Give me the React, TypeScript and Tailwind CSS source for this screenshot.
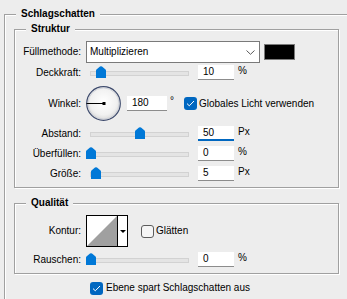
import React from "react";

const etched =
  "border border-[#a0a0a0] shadow-[1px_1px_0_#ffffff,inset_1px_1px_0_#ffffff]";

const Slider = ({ pos }: { pos: number }) => (
  <div className="relative h-[15px] w-[107px] shrink-0">
    <div className="absolute left-[4px] right-[4px] top-[6px] h-[5px] border border-[#d2d2d2] bg-[#e4e4e4]" />
    <svg
      className="absolute top-[1px]"
      style={{ left: pos }}
      width="10"
      height="12"
      viewBox="0 0 10 12"
    >
      <path
        d="M0 4.6 Q0 3.6 1 2.9 L4 0.6 Q5 -0.1 6 0.6 L9 2.9 Q10 3.6 10 4.6 V12 H0 Z"
        fill="#0078d7"
      />
    </svg>
  </div>
);

const Field = ({
  value,
  w = "w-[36px]",
  focus = false,
}: {
  value: string;
  w?: string;
  focus?: boolean;
}) => (
  <div
    className={`${w} h-[15px] shrink-0 bg-white pl-[5px] leading-[14px] ${
      focus
        ? "border-b-2 border-[#0067c0]"
        : "border-b border-[#8c8c8c]"
    }`}
  >
    {value}
  </div>
);

const Check = ({ checked }: { checked: boolean }) =>
  checked ? (
    <div className="flex h-[13px] w-[13px] shrink-0 items-center justify-center rounded-[3px] bg-[#0067c0]">
      <svg width="9" height="7" viewBox="0 0 9 7">
        <path d="M1 3.6 L3.3 5.8 L8 1" fill="none" stroke="#ffffff" strokeWidth="1" />
      </svg>
    </div>
  ) : (
    <div className="h-[13px] w-[13px] shrink-0 rounded-[3px] border border-[#5c5c5c] bg-[#f5f5f5]" />
  );

const Label = ({ children }: { children: React.ReactNode }) => (
  <div className="w-[66px] shrink-0 text-right">{children}</div>
);

const SliderRow = ({
  label,
  pos,
  value,
  unit,
  focus,
  className = "",
}: {
  label: string;
  pos: number;
  value: string;
  unit: string;
  focus?: boolean;
  className?: string;
}) => (
  <div className={`flex h-[15px] items-center ${className}`}>
    <Label>{label}</Label>
    <div className="ml-[5px]">
      <Slider pos={pos} />
    </div>
    <div className="ml-[5px]">
      <Field value={value} focus={focus} />
    </div>
    <span className="ml-[4px] -mt-[3px]">{unit}</span>
  </div>
);

export default function App() {
  return (
    <div className="h-[299px] w-[347px] overflow-hidden bg-[#ededed] font-['Liberation_Sans',Arial,sans-serif] text-[10px] leading-[14px] text-black">
      <fieldset className={`mt-[7px] ml-[4px] w-[360px] min-w-0 pb-[20px] ${etched}`}>
        <legend className="ml-[11px] bg-[#ededed] px-[5px] font-bold">Schlagschatten</legend>
        <div className="pl-[9px] pt-[1px]">
          <fieldset className={`w-[325px] min-w-0 ${etched}`}>
            <legend className="ml-[11px] bg-[#ededed] px-[5px] font-bold">Struktur</legend>
            <div className="pt-[5px] pb-[6px]">
              <div className="flex h-[22px] items-center">
                <Label>Füllmethode:</Label>
                <div className="ml-[5px] flex h-[22px] w-[174px] items-center justify-between border border-[#7a7a7a] bg-white pl-[3px] pr-[4px]">
                  <span>Multiplizieren</span>
                  <svg width="9" height="5" viewBox="0 0 9 5">
                    <path d="M0.5 0.5 L4.5 4.3 L8.5 0.5" fill="none" stroke="#5a5a5a" strokeWidth="1" />
                  </svg>
                </div>
                <div className="ml-[4px] h-[16px] w-[31px] border border-[#7a7a7a] bg-black" />
              </div>

              <SliderRow className="mt-[2px]" label="Deckkraft:" pos={10} value="10" unit="%" />

              <div className="mt-[6px] flex h-[35px] items-center">
                <Label>Winkel:</Label>
                <svg className="ml-[5px] shrink-0" width="35" height="35" viewBox="0 0 35 35">
                  <defs>
                    <radialGradient id="dial" cx="50%" cy="45%" r="55%">
                      <stop offset="0%" stopColor="#ffffff" />
                      <stop offset="70%" stopColor="#f1f1f1" />
                      <stop offset="100%" stopColor="#d8d8d8" />
                    </radialGradient>
                  </defs>
                  <circle cx="17.5" cy="17.5" r="16.8" fill="url(#dial)" stroke="#3e4b6d" strokeWidth="1.2" />
                  <circle cx="17.5" cy="17.5" r="15.6" fill="none" stroke="#c8cbd4" strokeWidth="0.8" />
                  <line x1="0.5" y1="17.5" x2="18" y2="17.5" stroke="#000000" strokeWidth="1" />
                  <rect x="16.5" y="16" width="3" height="3" fill="#000000" />
                </svg>
                <div className="ml-[6px]">
                  <Field value="180" w="w-[40px]" />
                </div>
                <span className="ml-[3px] -mt-[6px]">°</span>
                <div className="ml-[10px]">
                  <Check checked />
                </div>
                <span className="ml-[2px]">Globales Licht verwenden</span>
              </div>

              <SliderRow className="mt-[5px]" label="Abstand:" pos={49} value="50" unit="Px" focus />
              <SliderRow className="mt-[5px]" label="Überfüllen:" pos={0} value="0" unit="%" />
              <SliderRow className="mt-[5px]" label="Größe:" pos={5} value="5" unit="Px" />
            </div>
          </fieldset>

          <fieldset className={`mt-[8px] w-[325px] min-w-0 ${etched}`}>
            <legend className="ml-[11px] bg-[#ededed] px-[5px] font-bold">Qualität</legend>
            <div className="pt-[5px] pb-[6px]">
              <div className="flex h-[32px] items-center">
                <Label>Kontur:</Label>
                <div className="ml-[5px] flex h-[32px] w-[42px] border border-black bg-white">
                  <svg className="shrink-0" width="30" height="30" viewBox="0 0 30 30">
                    <polygon points="0,30 30,0 30,30" fill="#a0a0a0" />
                  </svg>
                  <div className="flex flex-1 items-center justify-center border-l border-black">
                    <svg width="6" height="3" viewBox="0 0 6 3">
                      <polygon points="0,0 6,0 3,3" fill="#000000" />
                    </svg>
                  </div>
                </div>
                <div className="ml-[13px]">
                  <Check checked={false} />
                </div>
                <span className="ml-[2px]">Glätten</span>
              </div>
              <SliderRow className="mt-[5px]" label="Rauschen:" pos={0} value="0" unit="%" />
            </div>
          </fieldset>

          <div className="mt-[7px] flex items-center">
            <div className="ml-[76px]">
              <Check checked />
            </div>
            <span className="ml-[3px]">Ebene spart Schlagschatten aus</span>
          </div>
        </div>
      </fieldset>
    </div>
  );
}
